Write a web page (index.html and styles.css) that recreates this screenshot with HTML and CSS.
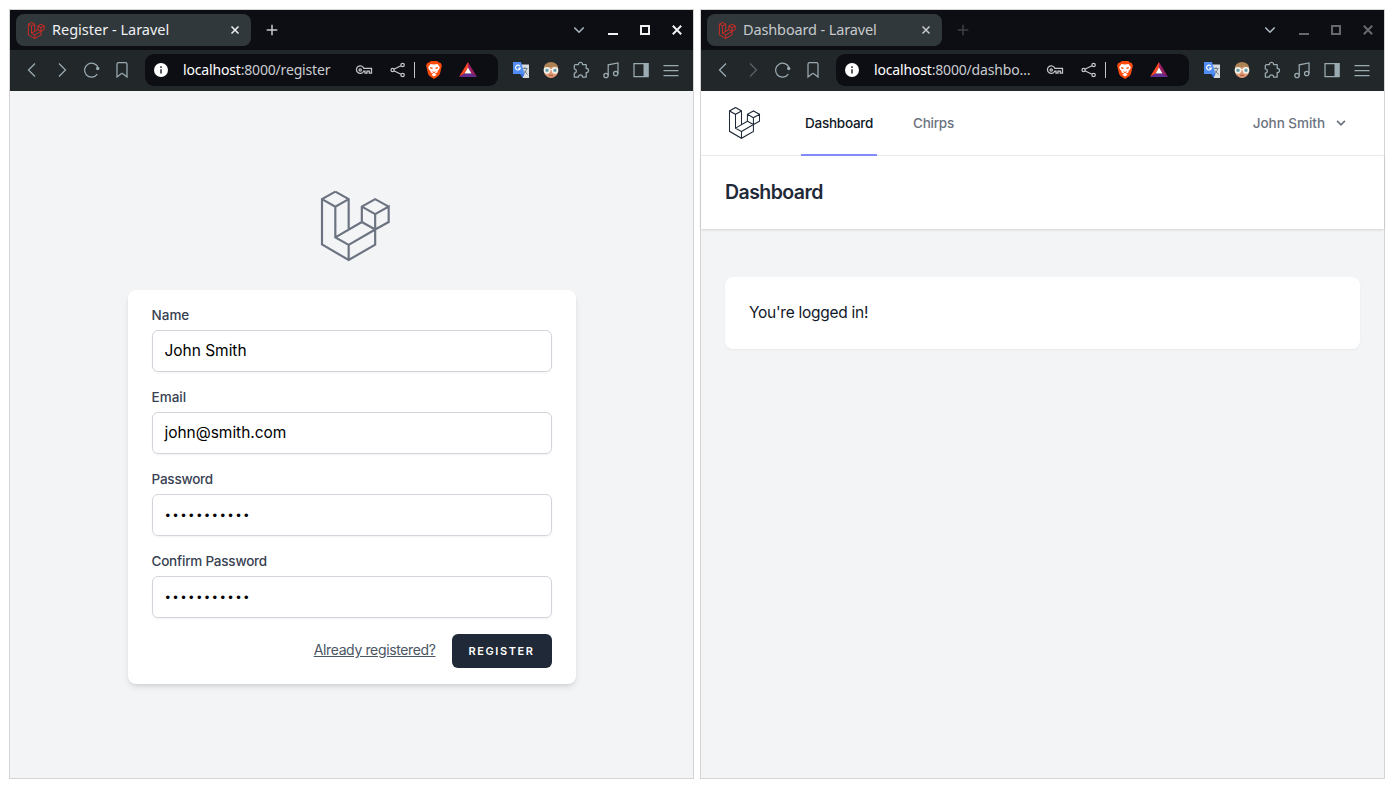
FILE: index.html
```
<!DOCTYPE html>
<html lang="en">
<head>
<meta charset="utf-8">
<title>Register - Laravel</title>
<link rel="stylesheet" href="styles.css">
</head>
<body>
<svg class="sprite" xmlns="http://www.w3.org/2000/svg">
  <symbol id="laravel" viewBox="36 18 240 240"><path d="M106 35 146 57.500V148M106 35 66 57.500V193.500L146 240 225.500 194V102.500L266 80V126L225.500 148.500 185.500 126V80L225.500 57.500 266 80M185.500 80 225.500 102.500M66 57.500 106 80 146 57.500M106 80V172L146 194.500V240M106 172 185.500 126M146 194.500 225.500 148.500"/></symbol>
  <symbol id="back" viewBox="0 0 20 20"><path d="M13 3.500 6.500 10 13 16.500"/></symbol>
  <symbol id="forward" viewBox="0 0 20 20"><path d="M7 3.500 13.500 10 7 16.500"/></symbol>
  <symbol id="reload" viewBox="0 0 20 20"><path d="M15.300 14.200A7 7 0 1 1 16.200 8"/><circle cx="15.700" cy="8.500" r="1.700" class="solid"/></symbol>
  <symbol id="bookmark" viewBox="0 0 20 20"><path d="M5 4.200Q5 2.700 6.500 2.700H13.500Q15 2.700 15 4.200V17L10.500 13.600Q10 13.200 9.500 13.600L5 17Z"/></symbol>
  <symbol id="info" viewBox="0 0 16 16"><circle cx="8" cy="8" r="7" fill="#fff"/><path d="M8 7.200V11.500M8 4.300V6" stroke="#3b3f45" stroke-width="1.700" fill="none"/></symbol>
  <symbol id="key" viewBox="0 0 20 20"><path d="M9.800 8.300H17.500V13H15.300V11H13V13H11V11.200H9.700A3.800 3.800 0 1 1 9.800 8.300Z"/><circle cx="6.200" cy="10" r="1.200"/></symbol>
  <symbol id="share" viewBox="0 0 20 20"><path d="M5.800 9.300 13 5.800M5.800 10.800 13 14.300"/><circle cx="4.600" cy="10" r="1.600"/><circle cx="14.600" cy="5" r="1.700"/><circle cx="14.600" cy="15" r="1.700"/></symbol>
  <symbol id="brave" viewBox="0 0 20 20"><path fill="#fb4b0b" d="M6.800 1H13.200L14.900 2.600 16.700 3 17.900 5.500 17.300 8 15.900 14 14.500 16 10 19 5.500 16 4.100 14 2.700 8 2.100 5.500 3.300 3 5.100 2.600Z"/><path fill="#fff" d="M6.500 4.100 10 4.600 13.500 4.100 15.900 7.200 14.700 10 13.800 10.600 13.300 12.500 10.800 13.500 12.700 14.700 10 16.500 7.300 14.700 9.200 13.500 6.700 12.500 6.200 10.600 5.300 10 4.100 7.200Z"/><path fill="#fb4b0b" d="M5.900 7.100 8.700 7.800 8.300 9.200 6.200 8.300ZM14.100 7.100 11.300 7.800 11.700 9.200 13.800 8.300ZM8.300 10.700 10 12.300 11.700 10.700 11 13 10 12.700 9 13Z"/></symbol>
  <symbol id="bat" viewBox="0 0 20 20"><path fill="#ff4724" d="M10 2V8L6.500 13.500 1 17Z"/><path fill="#9e1f63" d="M10 2 19 17 13.500 13.500 10 8Z"/><path fill="#662d91" d="M1 17 6.500 13.500H13.500L19 17Z"/><path fill="#fff" d="M10 7.500 13.500 13.500H6.500Z"/></symbol>
  <symbol id="translate" viewBox="0 0 20 20"><path fill="#d8dcdf" d="M9 4.500H18V18H12Z"/><path d="M11.500 8.500H16.500M14 7V8.500M15.500 9C15 11.500 13.500 13 12.500 14M13 10.500 16.500 14.500" fill="none" stroke="#6f8088" stroke-width="1"/><path fill="#376fd6" d="M9 14H13.500L11.500 18Z"/><path fill="#508df5" d="M2 2H10L13.500 14H2Z"/><path d="M9 6.300A2.400 2.400 0 1 0 9.300 8.200H7.200" fill="none" stroke="#fff" stroke-width="1.200"/></symbol>
  <symbol id="face" viewBox="0 0 20 20"><path fill="#e09b76" d="M2.800 9Q3 2.500 10 2.500T17.200 9L16.500 14Q13.500 18 10 18T3.500 14Z"/><path fill="#ae8354" d="M3 8Q4 2.300 10 2.300T17 8L13 6.500Q9 7.500 3 8Z"/><circle cx="6" cy="10.300" r="2.600" fill="#83b1ba" stroke="#f5f5ef" stroke-width="1.500"/><circle cx="14" cy="10.300" r="2.600" fill="#83b1ba" stroke="#f5f5ef" stroke-width="1.500"/><circle cx="6" cy="10.300" r=".7" fill="#4b7884"/><circle cx="14" cy="10.300" r=".7" fill="#4b7884"/><path d="M9 9.500H11" stroke="#f5f5ef" stroke-width="1"/><path d="M8 15.300H12" stroke="#a5533d" stroke-width="1"/></symbol>
  <symbol id="puzzle" viewBox="0 0 20 20"><path d="M4.500 4.500H7.500C7 1.600 12 1.600 11.500 4.500H15.200V8.500C18.300 8 18.300 13 15.200 12.500V17H11.500C12 14.200 7 14.200 7.500 17H3.300V13C6 13 6 9.200 3.300 9V5.700Q3.300 4.500 4.500 4.500Z" stroke-linejoin="round"/></symbol>
  <symbol id="music" viewBox="0 0 20 20"><circle cx="5" cy="15.500" r="2.200"/><circle cx="14.700" cy="13.500" r="2.200"/><path d="M7.200 15.500V4.800L17 3V13.500"/></symbol>
  <symbol id="panel" viewBox="0 0 20 20"><path d="M3 3.500H17V16.500H3Z"/><path class="solid" d="M12.500 3H17.500V17H12.500Z"/></symbol>
  <symbol id="menu" viewBox="0 0 20 20"><path d="M2.500 5.500H17.500M2.500 10.500H17.500M2.500 15.500H17.500"/></symbol>
  <symbol id="chevron" viewBox="0 0 12 12"><path d="M1.300 3.500 6 8.200 10.700 3.500"/></symbol>
  <symbol id="minimize" viewBox="0 0 12 12"><path d="M1 10H11"/></symbol>
  <symbol id="maximize" viewBox="0 0 12 12"><path d="M2 2H10V10H2Z"/></symbol>
  <symbol id="close" viewBox="0 0 12 12"><path d="M1.800 1.800 10.200 10.200M10.200 1.800 1.800 10.200"/></symbol>
  <symbol id="plus" viewBox="0 0 12 12"><path d="M6 .7V11.300M.7 6H11.300"/></symbol>
</svg>

<main class="desktop">
  <section class="window">
    <header class="titlebar">
      <div class="tab">
        <svg class="favicon"><use href="#laravel"/></svg>
        <span class="tab-title reg-title">Register - Laravel</span>
        <svg class="tab-close"><use href="#close"/></svg>
      </div>
      <svg class="new-tab"><use href="#plus"/></svg>
      <div class="controls">
        <svg class="tab-search"><use href="#chevron"/></svg>
        <svg><use href="#minimize"/></svg>
        <svg><use href="#maximize"/></svg>
        <svg><use href="#close"/></svg>
      </div>
    </header>
    <nav class="toolbar">
      <div class="icons">
        <svg><use href="#back"/></svg><svg><use href="#forward"/></svg><svg><use href="#reload"/></svg><svg><use href="#bookmark"/></svg>
      </div>
      <div class="address">
        <svg class="info"><use href="#info"/></svg>
        <span class="url"><b>localhost</b>:8000/register</span>
        <svg class="key"><use href="#key"/></svg>
        <svg class="share"><use href="#share"/></svg>
        <i class="divider"></i>
        <svg class="color brave"><use href="#brave"/></svg>
        <svg class="color"><use href="#bat"/></svg>
      </div>
      <div class="icons">
        <svg class="color"><use href="#translate"/></svg><svg class="color"><use href="#face"/></svg><svg><use href="#puzzle"/></svg><svg><use href="#music"/></svg><svg><use href="#panel"/></svg><svg><use href="#menu"/></svg>
      </div>
    </nav>
    <div class="page register">
      <svg class="brand"><use href="#laravel"/></svg>
      <form class="card">
        <div class="field"><span class="label">Name</span><div class="input">John Smith</div></div>
        <div class="field"><span class="label">Email</span><div class="input">john@smith.com</div></div>
        <div class="field"><span class="label tight">Password</span><div class="input dots">•••••••••••</div></div>
        <div class="field"><span class="label tight">Confirm Password</span><div class="input dots">•••••••••••</div></div>
        <div class="actions">
          <a class="login-link">Already registered?</a>
          <button class="submit" type="button">REGISTER</button>
        </div>
      </form>
    </div>
  </section>

  <section class="window inactive">
    <header class="titlebar">
      <div class="tab">
        <svg class="favicon"><use href="#laravel"/></svg>
        <span class="tab-title">Dashboard - Laravel</span>
        <svg class="tab-close"><use href="#close"/></svg>
      </div>
      <svg class="new-tab"><use href="#plus"/></svg>
      <div class="controls">
        <svg class="tab-search"><use href="#chevron"/></svg>
        <svg><use href="#minimize"/></svg>
        <svg><use href="#maximize"/></svg>
        <svg><use href="#close"/></svg>
      </div>
    </header>
    <nav class="toolbar">
      <div class="icons">
        <svg><use href="#back"/></svg><svg class="disabled"><use href="#forward"/></svg><svg><use href="#reload"/></svg><svg><use href="#bookmark"/></svg>
      </div>
      <div class="address">
        <svg class="info"><use href="#info"/></svg>
        <span class="url"><b>localhost</b>:8000/dashbo…</span>
        <svg class="key"><use href="#key"/></svg>
        <svg class="share"><use href="#share"/></svg>
        <i class="divider"></i>
        <svg class="color brave"><use href="#brave"/></svg>
        <svg class="color"><use href="#bat"/></svg>
      </div>
      <div class="icons">
        <svg class="color"><use href="#translate"/></svg><svg class="color"><use href="#face"/></svg><svg><use href="#puzzle"/></svg><svg><use href="#music"/></svg><svg><use href="#panel"/></svg><svg><use href="#menu"/></svg>
      </div>
    </nav>
    <div class="page">
      <nav class="app-nav">
        <svg class="nav-logo"><use href="#laravel"/></svg>
        <a class="nav-link active">Dashboard</a>
        <a class="nav-link chirps">Chirps</a>
        <div class="user"><span>John Smith</span><svg><use href="#chevron"/></svg></div>
      </nav>
      <header class="heading"><h2>Dashboard</h2></header>
      <div class="content"><div class="notice"><span>You're logged in!</span></div></div>
    </div>
  </section>
</main>
</body>
</html>
```
FILE: styles.css
```
* { box-sizing: border-box; }
body { margin: 0; background: #fff; font-family: Inter, "Liberation Sans", sans-serif; }
.sprite { position: absolute; width: 0; height: 0; }
svg { display: block; flex: none; fill: none; stroke: currentColor; }
.solid { fill: currentColor; stroke: none; }
.color { stroke: none; }

.desktop { display: flex; gap: 6px; padding: 9px; width: 1394px; height: 789px; }
.window { width: 685px; height: 770px; border: 1px solid #d4d4d5; display: flex; flex-direction: column; }

/* Browser chrome */
.titlebar { height: 40px; background: #0d0e13; display: flex; align-items: center; padding: 0 10px 0 6px; color: #f0f1f2; }
.tab { width: 235px; height: 32px; border-radius: 8px; background: #30383c; display: flex; align-items: center; padding: 0 11px 0 10px; }
.favicon { width: 19px; height: 19px; color: #d52b24; stroke-width: 12; }
.tab-title { font: 14.5px/20px "Noto Sans", sans-serif; margin-left: 7px; padding-bottom: 2px; flex: 1; white-space: nowrap; letter-spacing: -.13px; }
.reg-title { letter-spacing: 0; }
.tab-close { width: 10px; height: 10px; stroke-width: 1.8; }
.new-tab { width: 12px; height: 12px; margin-left: 15px; stroke-width: 1.5; color: #c6c9cc; }
.controls { display: flex; gap: 20px; margin-left: auto; }
.controls svg { width: 12px; height: 12px; stroke-width: 2; }
.controls .tab-search { margin-right: 2px; color: #a8b8be; stroke-width: 1.6; }
.toolbar { height: 41px; background: #22272a; display: flex; align-items: center; padding: 0 7px 1px; }
.icons { display: flex; color: #9aabb2; }
.icons svg { width: 30px; height: 20px; stroke-width: 1.25; }
.icons svg.color { stroke-width: 0; }
.address { width: 353px; height: 32px; margin: 0 8px; border-radius: 9px; background: #0d0e13; display: flex; align-items: center; padding-left: 8px; }
.info { width: 16px; height: 16px; stroke: none; }
.url { width: 171px; margin-left: 14px; white-space: nowrap; font: 14px/20px "Noto Sans", sans-serif; letter-spacing: -.17px; color: #c9cccf; }
.url b { font-weight: 400; color: #fff; }
.key, .share { width: 20px; height: 20px; color: #c3c5c8; stroke-width: 1.25; }
.share { margin-left: 14px; }
.divider { width: 1px; height: 16px; margin-left: 6px; background: #c3c5c8; }
.address .color { width: 20px; height: 20px; }
.brave { margin: 0 14px 0 9px; }
.inactive .tab-title, .inactive .tab-close { color: #c7cacc; }
.inactive .new-tab { color: #3d4044; }
.inactive .controls { color: #66686c; }
.icons .disabled { color: #596269; }

/* Registration page */
.page { flex: 1; background: #f3f4f6; color: #111827; }
.register { display: flex; flex-direction: column; align-items: center; padding-top: 95px; }
.brand { width: 80px; height: 80px; color: #6b7280; stroke-width: 6.5; }
.card { width: 448px; margin: 24px 0 0; padding: 16px 24px; background: #fff; border-radius: 8px; box-shadow: 0 4px 6px -1px rgba(0,0,0,.1), 0 2px 4px -2px rgba(0,0,0,.1); }
.field { margin-bottom: 16px; }
.label { display: block; font-size: 13.500px; line-height: 19px; height: 20px; font-weight: 450; color: #374151; white-space: nowrap; }
.tight { letter-spacing: -.22px; }
.input { height: 42px; margin-top: 4px; border: 1px solid #d1d5db; border-radius: 6px; box-shadow: 0 1px 2px rgba(0,0,0,.05); padding: 0 12px; font-size: 15.500px; line-height: 40px; letter-spacing: -.03px; color: #000; }
.dots { font-family: "Liberation Sans", sans-serif; font-size: 13px; letter-spacing: 3.300px; line-height: 42px; padding-left: 13px; }
.actions { display: flex; align-items: center; justify-content: flex-end; gap: 16px; }
.login-link { font-size: 14px; line-height: 20px; padding-bottom: 2px; color: #4b5563; text-decoration: underline; white-space: nowrap; letter-spacing: -.37px; }
.submit { width: 100px; height: 34px; border: 0; border-radius: 6px; padding: 0; background: #1f2937; color: #fff; font: 600 11px/16px Inter, sans-serif; letter-spacing: 1.550px; text-align: center; }

/* Dashboard page */
.app-nav { height: 65px; background: #fff; border-bottom: 1px solid #eceef1; display: flex; padding: 0 38px 0 24px; }
.nav-logo { width: 36px; height: 36px; margin: 14px 40px 0 0; color: #1f2937; stroke-width: 7; }
.nav-link { height: 65px; padding: 0 4px; width: 76px; font-size: 13.500px; line-height: 65px; font-weight: 450; color: #6b7280; white-space: nowrap; letter-spacing: -.25px; }
.nav-link.active { color: #111827; border-bottom: 2px solid #818cf8; }
.chirps { margin-left: 32px; }
.user { display: flex; align-items: center; margin-left: auto; gap: 11px; height: 63px; font-size: 13.500px; font-weight: 450; color: #6b7280; letter-spacing: -.03px; }
.user svg { width: 10px; height: 10px; stroke-width: 2; }
.heading { height: 73px; padding: 24px; background: #fff; box-shadow: 0 1px 3px rgba(0,0,0,.1), 0 1px 2px -1px rgba(0,0,0,.1); }
h2 { margin: 0; font-size: 19.500px; line-height: 25px; font-weight: 600; color: #1f2937; letter-spacing: -.55px; }
.content { padding: 48px 24px; }
.notice { height: 72px; padding: 24px; background: #fff; border-radius: 8px; box-shadow: 0 1px 2px rgba(0,0,0,.05); font-size: 15.500px; line-height: 24px; letter-spacing: -.27px; }
```
